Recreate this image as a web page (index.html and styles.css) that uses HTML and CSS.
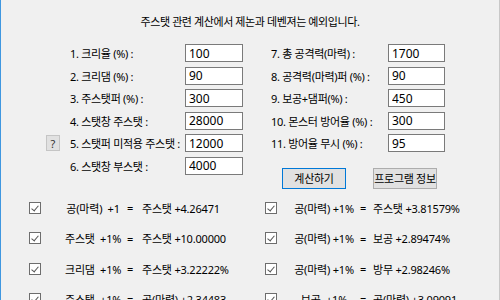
FILE: index.html
```html
<!DOCTYPE html>
<html>
	<head>
		<meta charset="utf-8">
		<title>주스탯 계산기</title>
		<link rel="stylesheet" href="styles.css">
	</head>
	<body>
		<div class="window">
			<p class="notice">주스탯 관련 계산에서 제논과 데벤져는 예외입니다.</p>

			<div class="form">
				<div class="col col-left">
					<div class="row"><span class="help"></span><label>1. 크리율 (%) :</label><input class="field" value="100"></div>
					<div class="row"><span class="help"></span><label>2. 크리댐 (%) :</label><input class="field" value="90"></div>
					<div class="row"><span class="help"></span><label>3. 주스탯퍼 (%) :</label><input class="field" value="300"></div>
					<div class="row"><span class="help"></span><label>4. 스탯창 주스탯 :</label><input class="field" value="28000"></div>
					<div class="row"><button class="help btn-q">?</button><label>5. 스탯퍼 미적용 주스탯 :</label><input class="field" value="12000"></div>
					<div class="row"><span class="help"></span><label>6. 스탯창 부스탯 :</label><input class="field" value="4000"></div>
				</div>
				<div class="col col-right">
					<div class="row"><label>7. 총 공격력(마력) :</label><input class="field" value="1700"></div>
					<div class="row"><label>8. 공격력(마력)퍼 (%) :</label><input class="field" value="90"></div>
					<div class="row"><label>9. 보공+댐퍼(%) :</label><input class="field" value="450"></div>
					<div class="row"><label>10. 몬스터 방어율 (%) :</label><input class="field" value="300"></div>
					<div class="row"><label>11. 방어율 무시 (%) :</label><input class="field" value="95"></div>
					<div class="actions">
						<button class="btn btn-focus">계산하기</button>
						<button class="btn">프로그램 정보</button>
					</div>
				</div>
			</div>

			<!-- 결과: 왼쪽/오른쪽 두 줄씩 번갈아 -->
			<div class="results">
				<div class="result"><span class="check"></span><span class="lhs">공(마력)  +1</span><span class="eq">=</span><span class="rhs">주스탯 +4.26471</span></div>
				<div class="result r"><span class="check"></span><span class="lhs">공(마력) +1%</span><span class="eq">=</span><span class="rhs">주스탯 +3.81579%</span></div>
				<div class="result"><span class="check"></span><span class="lhs">주스탯  +1%</span><span class="eq">=</span><span class="rhs">주스탯 +10.00000</span></div>
				<div class="result r"><span class="check"></span><span class="lhs">공(마력) +1%</span><span class="eq">=</span><span class="rhs">보공 +2.89474%</span></div>
				<div class="result"><span class="check"></span><span class="lhs">크리댐  +1%</span><span class="eq">=</span><span class="rhs">주스탯 +3.22222%</span></div>
				<div class="result r"><span class="check"></span><span class="lhs">공(마력) +1%</span><span class="eq">=</span><span class="rhs">방무 +2.98246%</span></div>
				<div class="result"><span class="check"></span><span class="lhs">주스탯  +1%</span><span class="eq">=</span><span class="rhs">공(마력) +2.34483</span></div>
				<div class="result r"><span class="check"></span><span class="lhs">보공  +1%</span><span class="eq">=</span><span class="rhs">공(마력) +3.09091</span></div>
			</div>
		</div>
	</body>
</html>
```

FILE: styles.css
```css
*{
	margin: 0;
	padding: 0;
	box-sizing: border-box;
}
body{
	width: 500px;
	height: 300px;
	overflow: hidden;
	background: #f0f0f0;
	font-family: "Noto Sans", "Noto Sans CJK KR", sans-serif;
	font-size: 11px;
	color: #000;
}
.window{
	height: 300px;
	border-left: 1px solid #3f97e0;
	border-right: 1px solid #c8c8c8;
}
.notice{
	padding-top: 13px;
	height: 44px;
	text-align: center;
	letter-spacing: -0.4px;
}
.form{
	display: flex;
	padding-left: 45px;
}
.col{
	display: flex;
	flex-direction: column;
	gap: 4.6px;
}
.row{
	display: grid;
	align-items: center;
	height: 18px;
}
.col-left .row{
	grid-template-columns: 24px 115px 58px;
}
.col-right{
	margin-left: 28px;
}
.col-right .row{
	grid-template-columns: 117px 57px;
}
label{
	white-space: nowrap;
	letter-spacing: -0.3px;
}
.field{
	height: 18px;
	border: 1px solid #7a7a7a;
	background: #fff;
	padding-left: 3px;
	font: inherit;
	font-size: 12px;
	outline: none;
}
.btn-q{
	width: 14px;
	height: 16px;
	border: 1px solid #c5c5c5;
	background: #e1e1e1;
	font: inherit;
	font-size: 11px;
	color: #333;
}
.actions{
	display: flex;
	gap: 27px;
	padding-left: 11px;
	margin-top: 11px;
}
.btn{
	width: 64px;
	height: 21px;
	border: 1px solid #adadad;
	background: #e1e1e1;
	font: inherit;
	letter-spacing: -0.3px;
}
.btn-focus{
	border-color: #0078d7;
}
.results{
	display: grid;
	grid-template-columns: 236px 236px;
	row-gap: 18.3px;
	padding-left: 28px;
	margin-top: 13px;
}
.result{
	display: flex;
	align-items: center;
	height: 12px;
	white-space: pre;
	letter-spacing: -0.2px;
}
.check{
	width: 12px;
	height: 12px;
	border: 1px solid #6d6d6d;
	background: #fff;
	position: relative;
}
.check::after{
	content: "";
	position: absolute;
	left: 3px;
	top: 1px;
	width: 3px;
	height: 6px;
	border: solid #555;
	border-width: 0 1px 1px 0;
	transform: rotate(40deg);
}
.lhs{
	width: 56px;
	margin-left: 24px;
	text-align: center;
}
.eq{
	margin-left: 6px;
	width: 6px;
}
.rhs{
	margin-left: 9px;
}
.r .lhs{
	width: 62px;
	margin-left: 16px;
}
.r .eq{
	margin-left: 5px;
}
.r .rhs{
	margin-left: 7px;
}
```
